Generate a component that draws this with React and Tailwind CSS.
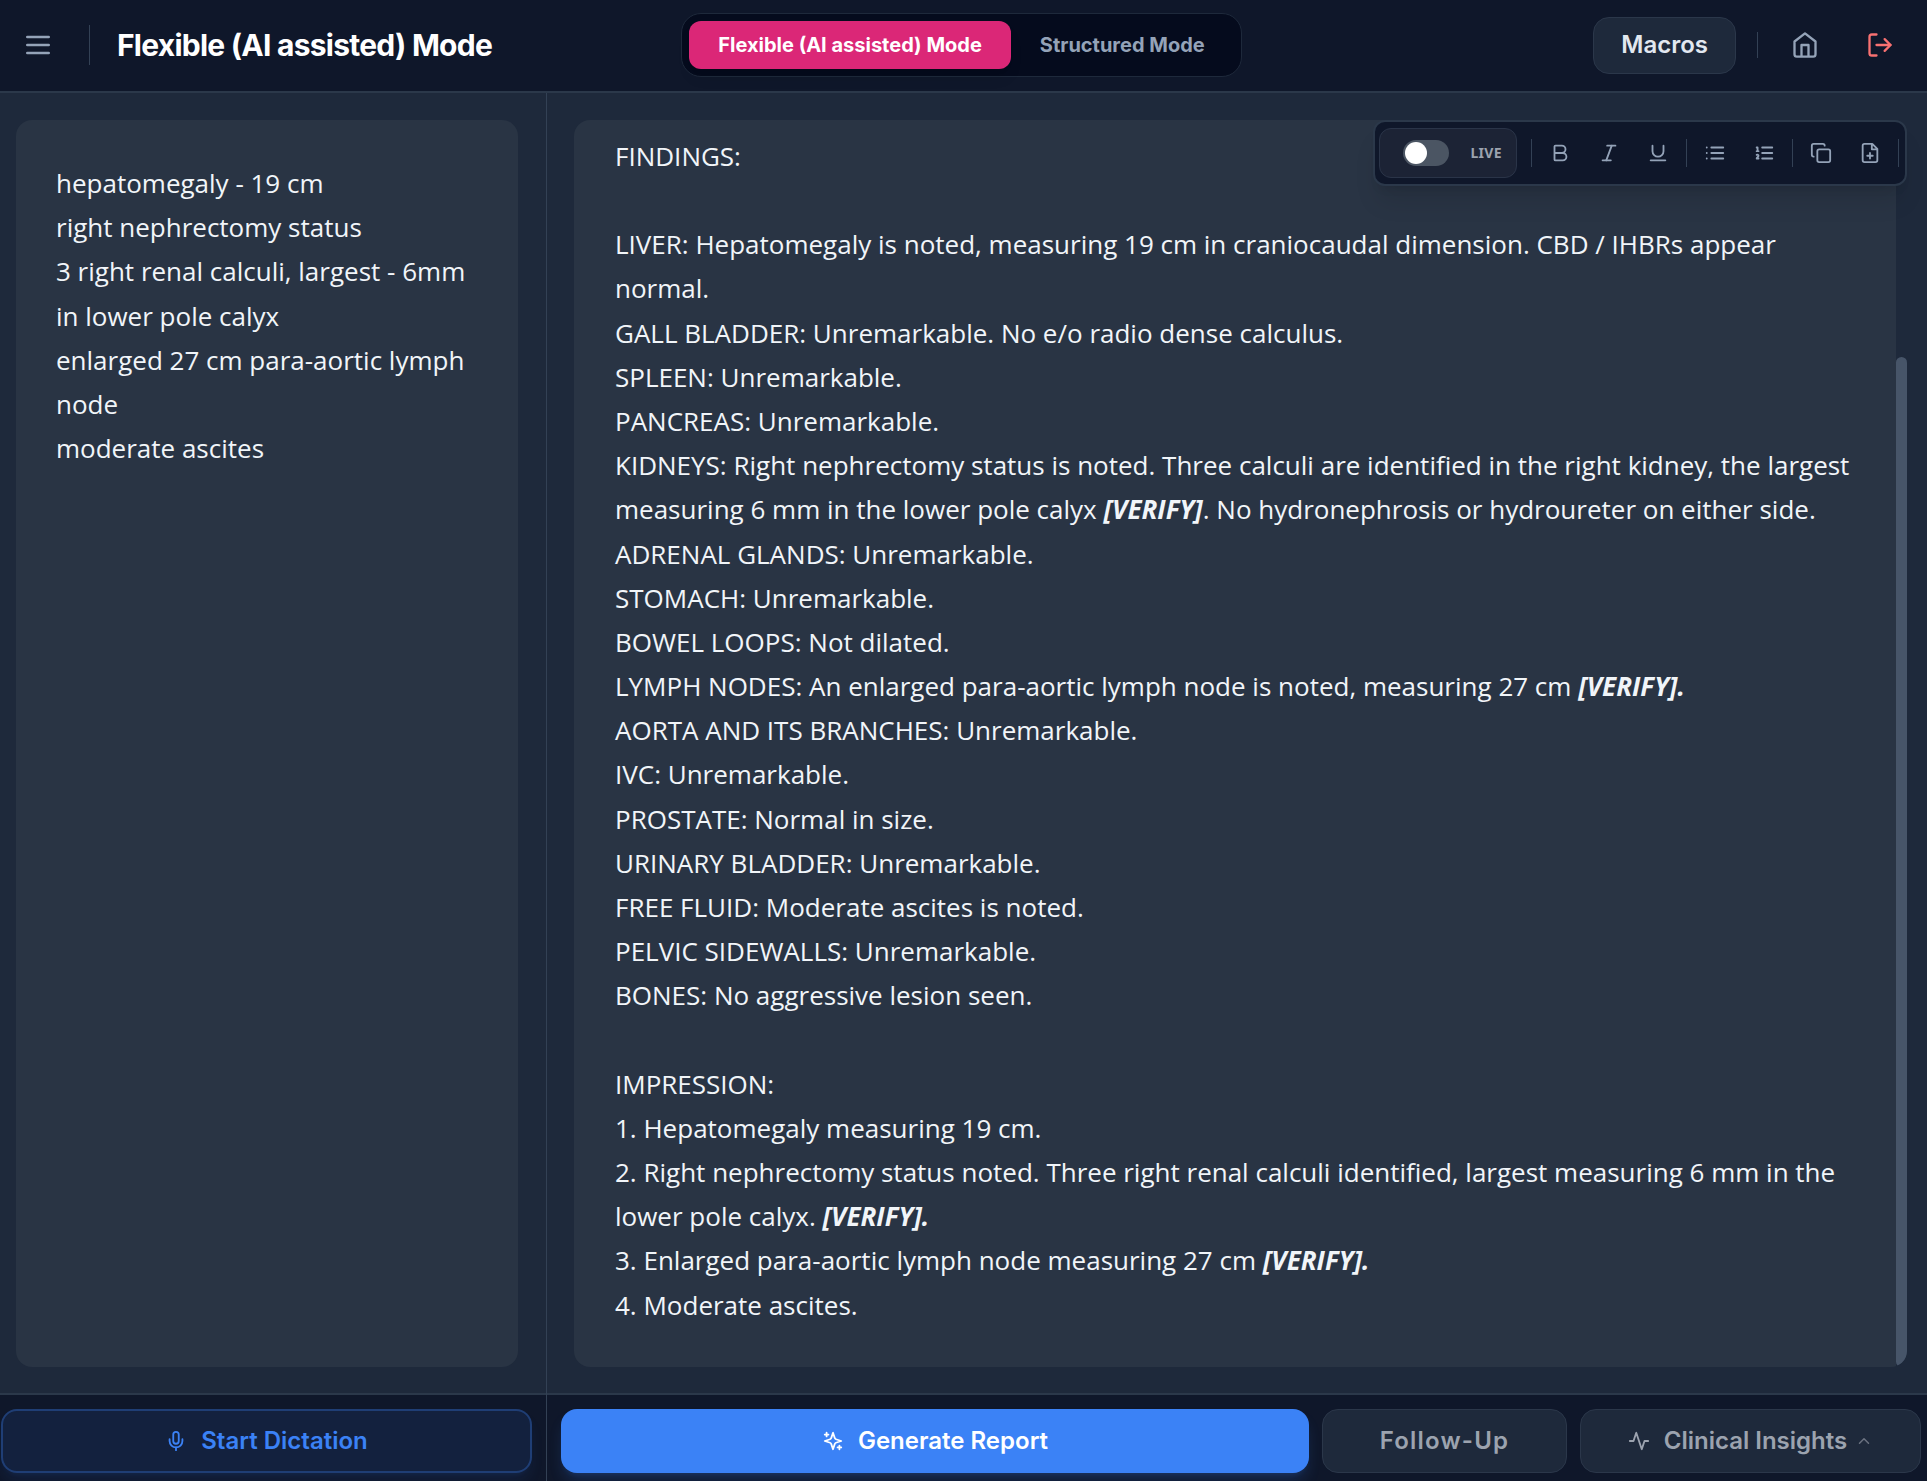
import { useState } from 'react';
import { Bold, ChevronUp, Copy, Italic, LogOut, Mic, Underline } from 'lucide-react';

const DICTATION = `hepatomegaly - 19 cm
right nephrectomy status
3 right renal calculi, largest - 6mm in lower pole calyx
enlarged 27 cm para-aortic lymph node
moderate ascites`;

const REPORT = [
  'FINDINGS:',
  '',
  'LIVER: Hepatomegaly is noted, measuring 19 cm in craniocaudal dimension. CBD / IHBRs appear normal.',
  'GALL BLADDER: Unremarkable. No e/o radio dense calculus.',
  'SPLEEN: Unremarkable.',
  'PANCREAS: Unremarkable.',
  'KIDNEYS: Right nephrectomy status is noted. Three calculi are identified in the right kidney, the largest measuring 6 mm in the lower pole calyx *[VERIFY]*. No hydronephrosis or hydroureter on either side.',
  'ADRENAL GLANDS: Unremarkable.',
  'STOMACH: Unremarkable.',
  'BOWEL LOOPS: Not dilated.',
  'LYMPH NODES: An enlarged para-aortic lymph node is noted, measuring 27 cm *[VERIFY].*',
  'AORTA AND ITS BRANCHES: Unremarkable.',
  'IVC: Unremarkable.',
  'PROSTATE: Normal in size.',
  'URINARY BLADDER: Unremarkable.',
  'FREE FLUID: Moderate ascites is noted.',
  'PELVIC SIDEWALLS: Unremarkable.',
  'BONES: No aggressive lesion seen.',
  '',
  'IMPRESSION:',
  '1. Hepatomegaly measuring 19 cm.',
  '2. Right nephrectomy status noted. Three right renal calculi identified, largest measuring 6 mm in the lower pole calyx. *[VERIFY].*',
  '3. Enlarged para-aortic lymph node measuring 27 cm *[VERIFY].*',
  '4. Moderate ascites.',
];

function Icon({ d, size = 22 }) {
  return (
    <svg width={size} height={size} viewBox="0 0 24 24" fill="none" stroke="currentColor" strokeWidth="2" strokeLinecap="round" strokeLinejoin="round">
      <path d={d} />
    </svg>
  );
}

const MenuIcon = () => <Icon size={32} d="M4 6h16M4 12h16M4 18h16" />;
const HomeIcon = () => <Icon size={28} d="m3 9 9-7 9 7v11a2 2 0 0 1-2 2H5a2 2 0 0 1-2-2zM9 22V12h6v10" />;
const ListIcon = () => <Icon d="M8 6h13M8 12h13M8 18h13M3 6h.01M3 12h.01M3 18h.01" />;
const NumberedIcon = () => <Icon d="M10 6h11M10 12h11M10 18h11M4 6h1v4M4 10h2M6 18H4c0-1 2-2 2-3s-1-1.5-2-1" />;
const FilePlusIcon = () => <Icon d="M14.5 2H6a2 2 0 0 0-2 2v16a2 2 0 0 0 2 2h12a2 2 0 0 0 2-2V7.5L14.5 2zM14 2v6h6M12 18v-6M9 15h6" />;
const PulseIcon = () => <Icon d="M22 12h-4l-3 9L9 3l-3 9H2" />;
const SparklesIcon = () => (
  <Icon d="m12 3-1.912 5.813a2 2 0 0 1-1.275 1.275L3 12l5.813 1.912a2 2 0 0 1 1.275 1.275L12 21l1.912-5.813a2 2 0 0 1 1.275-1.275L21 12l-5.813-1.912a2 2 0 0 1-1.275-1.275L12 3ZM5 3v4M19 17v4M3 5h4M17 19h4" />
);

// text between asterisks is flagged for the radiologist to check
function ReportLine({ text }) {
  return (
    <p className="min-h-[44px]">
      {text.split('*').map((part, i) =>
        i % 2 ? <strong key={i} className="font-bold italic">{part}</strong> : part
      )}
    </p>
  );
}

function ToolButton({ label, children }) {
  return (
    <button aria-label={label} className="flex h-10 w-[42px] items-center justify-center rounded-lg text-[#94a3b8]">
      {children}
    </button>
  );
}

function Divider() {
  return <span className="h-7 w-px shrink-0 bg-[#334155]" />;
}

function Toolbar() {
  const [live, setLive] = useState(false);
  return (
    <div className="absolute right-0 top-0 flex h-[66px] items-center gap-[7px] rounded-xl border-2 border-[#2b384a] bg-[#0f172a] pl-1 pr-[6px] shadow-xl">
      <label className="mr-[7px] flex h-[50px] w-[138px] items-center justify-between rounded-xl border border-[#2a3448] bg-[#1c2335] pl-[23px] pr-[14px]">
        <input type="checkbox" checked={live} onChange={(e) => setLive(e.target.checked)} className="sr-only" />
        <span className={`flex h-[26px] w-[46px] items-center rounded-full px-[2px] ${live ? 'justify-end bg-[#3b82f6]' : 'bg-[#4b5563]'}`}>
          <span className="h-[22px] w-[22px] rounded-full bg-white" />
        </span>
        <span className="font-['Noto_Sans',sans-serif] text-sm font-bold tracking-wide text-[#9ca3af]">LIVE</span>
      </label>
      <Divider />
      <ToolButton label="Bold"><Bold size={22} /></ToolButton>
      <ToolButton label="Italic"><Italic size={22} /></ToolButton>
      <ToolButton label="Underline"><Underline size={22} /></ToolButton>
      <Divider />
      <ToolButton label="Bulleted list"><ListIcon /></ToolButton>
      <ToolButton label="Numbered list"><NumberedIcon /></ToolButton>
      <Divider />
      <ToolButton label="Copy"><Copy size={22} /></ToolButton>
      <ToolButton label="New report"><FilePlusIcon /></ToolButton>
      <Divider />
    </div>
  );
}

function Header() {
  return (
    <header className="grid h-[93px] grid-cols-[1fr_auto_1fr] items-center border-b-2 border-[#2b384a] bg-[#0f172a] pb-px pl-[22px] pr-[26px]">
      <div className="flex items-center">
        <button aria-label="Menu" className="text-[#94a3b8]"><MenuIcon /></button>
        <span className="ml-[35px] h-10 w-px bg-[#334155]" />
        <h1 className="ml-[27px] text-[30px] font-bold tracking-tight text-white">Flexible (AI assisted) Mode</h1>
      </div>
      <nav className="flex h-16 items-center rounded-[20px] border border-[#1e293b] bg-[#050b1d] p-[7px]">
        <button className="h-12 rounded-xl bg-[#db2777] px-[29px] text-xl font-bold text-white shadow-lg">Flexible (AI assisted) Mode</button>
        <button className="h-12 px-[29px] text-xl font-bold text-[#94a3b8]">Structured Mode</button>
      </nav>
      <div className="flex items-center justify-end">
        <button className="h-[57px] rounded-2xl border border-[#2b374a] bg-[#1e293b] px-[27px] text-2xl font-semibold text-[#e2e8f0]">Macros</button>
        <span className="ml-[21px] h-[26px] w-px bg-[#334155]" />
        <a href="#home" aria-label="Home" className="ml-[33px] text-[#94a3b8]"><HomeIcon /></a>
        <button aria-label="Log out" className="ml-[47px] mr-[7px] text-[#f87171]"><LogOut size={28} /></button>
      </div>
    </header>
  );
}

export default function App() {
  const [dictation, setDictation] = useState(DICTATION);
  return (
    <div className="flex min-h-screen flex-col bg-[#1e293b] font-['Inter',sans-serif]">
      <Header />
      <main className="flex flex-1">
        <section className="flex w-[547px] shrink-0 flex-col border-r border-[#334155]">
          <div className="flex flex-1 flex-col pb-[26px] pl-4 pr-7 pt-[27px]">
            <textarea
              aria-label="Dictation"
              spellCheck={false}
              value={dictation}
              onChange={(e) => setDictation(e.target.value)}
              className="flex-1 resize-none rounded-2xl bg-[#293444] px-10 py-[41px] font-['Open_Sans',sans-serif] text-[26px] leading-[1.7] text-[#f1f5f9] outline-none"
            />
          </div>
          <div className="h-[88px] overflow-hidden border-t-2 border-[#2b384a] bg-[#0f172a] pl-px pr-[14px] pt-[14px]">
            <button className="flex h-16 w-full items-center justify-center gap-[14px] rounded-2xl border-2 border-[#3b82f6]/30 bg-[#3b82f6]/10 text-2xl font-semibold text-[#3b82f6] shadow-lg shadow-[#3b82f6]/10">
              <Mic size={22} />
              Start Dictation
            </button>
          </div>
        </section>
        <section className="flex min-w-0 flex-1 flex-col">
          <div className="flex flex-1 flex-col pb-[26px] pl-[27px] pr-5 pt-[27px]">
            <div className="relative flex flex-1">
              <div className="flex flex-1 overflow-hidden rounded-2xl">
                <div
                  contentEditable
                  suppressContentEditableWarning
                  spellCheck={false}
                  className="flex-1 bg-[#293444] px-[41px] pt-[14px] font-['Open_Sans',sans-serif] text-[26px] leading-[1.7] text-[#f1f5f9] outline-none"
                >
                  {REPORT.map((line, i) => <ReportLine key={i} text={line} />)}
                </div>
                <div className="flex w-[11px] flex-col justify-end bg-[#1e293b]">
                  <div className="h-[81%] rounded-full bg-[#475569]" />
                </div>
              </div>
              <Toolbar />
            </div>
          </div>
          <div className="flex h-[88px] gap-[13px] overflow-hidden border-t-2 border-[#2b384a] bg-[#0f172a] pl-[14px] pr-[6px] pt-[14px]">
            <button className="flex h-16 flex-1 items-center justify-center gap-[14px] rounded-2xl bg-[#3b82f6] text-2xl font-semibold text-white shadow-lg shadow-[#3b82f6]/20">
              <SparklesIcon />
              Generate Report
            </button>
            <button className="h-16 w-[245px] rounded-2xl border border-[#2b374a] bg-[#1e293b] text-2xl font-semibold tracking-wider text-[#9ca3af]">Follow-Up</button>
            <button className="flex h-16 w-[341px] items-center justify-center rounded-2xl border border-[#2b374a] bg-[#1e293b] text-2xl font-semibold text-[#9ca3af]">
              <PulseIcon />
              <span className="ml-[14px] mr-2">Clinical Insights</span>
              <ChevronUp size={18} className="text-[#6b7280]" />
            </button>
          </div>
        </section>
      </main>
    </div>
  );
}
